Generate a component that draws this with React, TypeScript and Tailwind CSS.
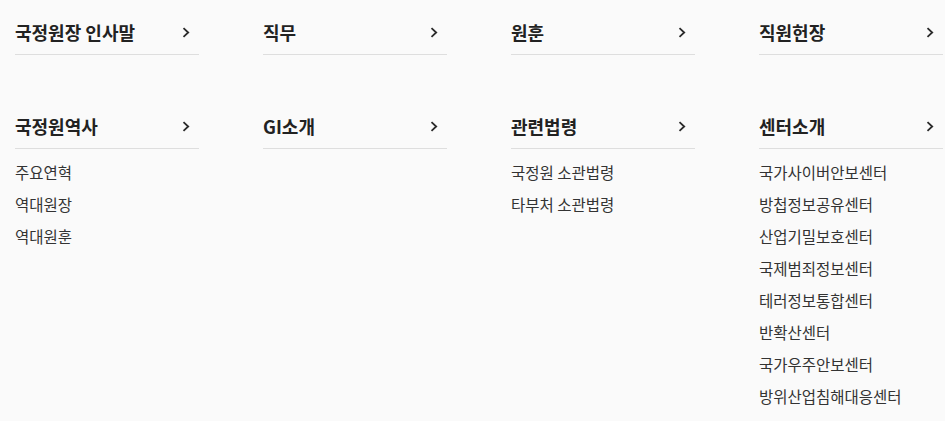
import React from 'react';

type Section = { title: string; items?: string[] };

const topRow: Section[] = [
  { title: '국정원장 인사말' },
  { title: '직무' },
  { title: '원훈' },
  { title: '직원헌장' },
];

const bottomRow: Section[] = [
  { title: '국정원역사', items: ['주요연혁', '역대원장', '역대원훈'] },
  { title: 'GI소개' },
  { title: '관련법령', items: ['국정원 소관법령', '타부처 소관법령'] },
  {
    title: '센터소개',
    items: [
      '국가사이버안보센터',
      '방첩정보공유센터',
      '산업기밀보호센터',
      '국제범죄정보센터',
      '테러정보통합센터',
      '반확산센터',
      '국가우주안보센터',
      '방위산업침해대응센터',
    ],
  },
];

const Chevron = () => (
  <svg width="8" height="11" viewBox="0 0 8 11" className="mr-[9px]">
    <polyline points="1.5,1.2 6.2,5.5 1.5,9.8" fill="none" stroke="#2a2a2a" strokeWidth="1.8" />
  </svg>
);

const Heading = ({ title }: { title: string }) => (
  <div className="flex items-center justify-between h-[24px] pb-[10px] box-content border-b border-[#dedede]">
    <span className="text-[18px] leading-[24px] font-bold text-[#222]">{title}</span>
    <Chevron />
  </div>
);

export default function App() {
  return (
    <div
      className="w-[945px] h-[421px] bg-[#fafafa] pt-[20px] pl-[15px] overflow-hidden"
      style={{ fontFamily: '"Noto Sans CJK KR", "Noto Sans", sans-serif' }}
    >
      <div className="grid grid-cols-[184px_184px_184px_184px] gap-x-[64px]">
        {topRow.map((s) => (
          <Heading key={s.title} title={s.title} />
        ))}
      </div>
      <div className="grid grid-cols-[184px_184px_184px_184px] gap-x-[64px] mt-[59px]">
        {bottomRow.map((s) => (
          <div key={s.title}>
            <Heading title={s.title} />
            {s.items && (
              <ul className="pt-[7px]">
                {s.items.map((it) => (
                  <li key={it} className="h-[32px] leading-[32px] text-[15.5px] text-[#333]">
                    {it}
                  </li>
                ))}
              </ul>
            )}
          </div>
        ))}
      </div>
    </div>
  );
}
